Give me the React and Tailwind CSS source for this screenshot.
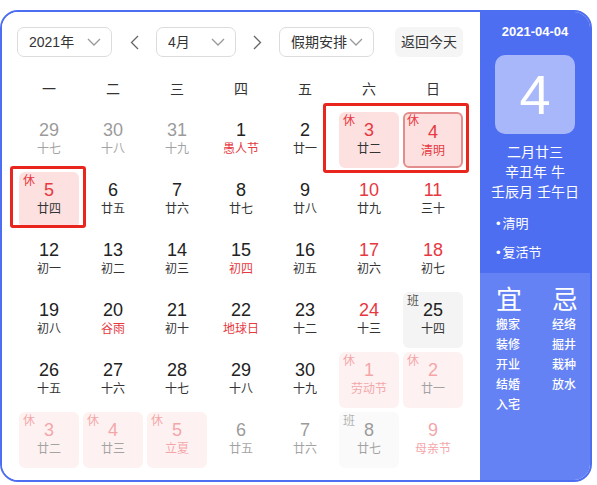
import React from 'react';

const weekdays = ['一', '二', '三', '四', '五', '六', '日'];

// t: p = prev month, n = next month; hol = 休, ban = 班, red = red number, lr = red lunar text
const days = [
  { n: 29, l: '十七', t: 'p' }, { n: 30, l: '十八', t: 'p' }, { n: 31, l: '十九', t: 'p' },
  { n: 1, l: '愚人节', lr: true }, { n: 2, l: '廿一' },
  { n: 3, l: '廿二', hol: true, red: true }, { n: 4, l: '清明', hol: true, red: true, lr: true, today: true },

  { n: 5, l: '廿四', hol: true, red: true }, { n: 6, l: '廿五' }, { n: 7, l: '廿六' }, { n: 8, l: '廿七' },
  { n: 9, l: '廿八' }, { n: 10, l: '廿九', red: true }, { n: 11, l: '三十', red: true },

  { n: 12, l: '初一' }, { n: 13, l: '初二' }, { n: 14, l: '初三' }, { n: 15, l: '初四', lr: true },
  { n: 16, l: '初五' }, { n: 17, l: '初六', red: true }, { n: 18, l: '初七', red: true },

  { n: 19, l: '初八' }, { n: 20, l: '谷雨', lr: true }, { n: 21, l: '初十' }, { n: 22, l: '地球日', lr: true },
  { n: 23, l: '十二' }, { n: 24, l: '十三', red: true }, { n: 25, l: '十四', ban: true },

  { n: 26, l: '十五' }, { n: 27, l: '十六' }, { n: 28, l: '十七' }, { n: 29, l: '十八' }, { n: 30, l: '十九' },
  { n: 1, l: '劳动节', t: 'n', hol: true, red: true, lr: true }, { n: 2, l: '廿一', t: 'n', hol: true, red: true },

  { n: 3, l: '廿二', t: 'n', hol: true, red: true }, { n: 4, l: '廿三', t: 'n', hol: true, red: true },
  { n: 5, l: '立夏', t: 'n', hol: true, red: true, lr: true }, { n: 6, l: '廿五', t: 'n' }, { n: 7, l: '廿六', t: 'n' },
  { n: 8, l: '廿七', t: 'n', ban: true }, { n: 9, l: '母亲节', t: 'n', red: true, lr: true },
];

function Chevron() {
  return (
    <svg width="14" height="8" viewBox="0 0 14 8" fill="none">
      <polyline points="1,1 7,7 13,1" stroke="#999" strokeWidth="1.3" />
    </svg>
  );
}

function Arrow({ dir }) {
  return (
    <svg width="9" height="15" viewBox="0 0 9 15" fill="none">
      <polyline points={dir === 'l' ? '8,1 1.5,7.5 8,14' : '1,1 7.5,7.5 1,14'} stroke="#666" strokeWidth="1.3" />
    </svg>
  );
}

function Select({ label, w }) {
  return (
    <div className={`${w} h-[30px] flex items-center justify-between pl-[11px] pr-[10px] border border-[#dcdcdc] rounded-[7px] text-[14px] text-[#333]`}>
      <span>{label}</span>
      <Chevron />
    </div>
  );
}

function Day({ d }) {
  let box = 'relative mx-[2px] my-[2px] h-[56px] rounded-[6px] flex flex-col items-center pt-[7px]';
  if (d.hol) box += ' bg-[#fde1e1]';
  if (d.ban) box += ' bg-[#f4f4f4]';
  if (d.today) box += ' border-2 border-[#e48d8d] pt-[5px]';
  if (d.t) box += ' opacity-[0.45]';
  const num = d.red ? 'text-[#e6393f]' : 'text-[#222]';
  const lun = d.lr ? 'text-[#e6393f]' : 'text-[#333]';
  return (
    <div className={box}>
      {d.hol && <span className={`absolute ${d.today ? 'left-[2px] top-0' : 'left-[4px] top-[2px]'} text-[12px] leading-[14px] text-[#e6393f]`}>休</span>}
      {d.ban && <span className="absolute left-[4px] top-[2px] text-[12px] leading-[14px] text-[#555]">班</span>}
      <span className={`text-[18px] leading-[22px] ${num}`}>{d.n}</span>
      <span className={`text-[12px] leading-[16px] ${lun}`}>{d.l}</span>
    </div>
  );
}

export default function App() {
  return (
    <div className="font-['Liberation_Sans','Noto_Sans_CJK_SC',sans-serif] bg-white w-[597px] h-[485px] pt-[10px]">
      <div className="w-[592px] h-[472px] border-2 border-[#4e6ef2] rounded-[18px] overflow-hidden flex">
        {/* calendar */}
        <div className="w-[478px] bg-white pt-[15px] pl-[15px]">
          <div className="flex items-center">
            <Select label="2021年" w="w-[95px]" />
            <div className="w-[44px] flex justify-center"><Arrow dir="l" /></div>
            <Select label="4月" w="w-[80px]" />
            <div className="w-[43px] flex justify-center"><Arrow dir="r" /></div>
            <Select label="假期安排" w="w-[95px]" />
            <div className="ml-[21px] w-[68px] h-[30px] flex items-center justify-center rounded-[6px] bg-[#f5f5f6] text-[14px] text-[#333]">返回今天</div>
          </div>

          <div className="grid grid-cols-7 w-[448px] mt-[17px] h-[30px] items-center text-center text-[14px] text-[#333]">
            {weekdays.map(w => <div key={w}>{w}</div>)}
          </div>

          <div className="relative grid grid-cols-7 w-[448px] mt-[6px]">
            {days.map((d, i) => <Day key={i} d={d} />)}
            <div className="absolute left-[306px] top-[-7px] w-[146px] h-[70px] border-[3px] border-[#e8261e] rounded-[3px]" />
            <div className="absolute left-[-7px] top-[56px] w-[76px] h-[62px] border-[3px] border-[#e8261e] rounded-[3px]" />
          </div>
        </div>

        {/* side panel */}
        <div className="flex-1 flex flex-col text-white">
          <div className="h-[261px] bg-[#4e6ef2] flex flex-col pt-[11px]">
            <div className="text-center text-[13px] leading-[18px] font-bold">2021-04-04</div>
            <div className="mx-auto mt-[14px] w-[80px] h-[79px] rounded-[10px] bg-white/50 flex items-center justify-center text-[56px] leading-none font-light">4</div>
            <div className="mt-[8px] text-center text-[14px] leading-[20px]">
              <div>二月廿三</div>
              <div>辛丑年 牛</div>
              <div>壬辰月 壬午日</div>
            </div>
            <div className="pl-[16px] mt-[12px] text-[13px] leading-[20px]">
              <div><span className="mr-[2px]">•</span>清明</div>
              <div className="mt-[9px]"><span className="mr-[2px]">•</span>复活节</div>
            </div>
          </div>
          <div className="flex-1 bg-[#6482f4] pl-[16px] pt-[12px] flex">
            <div className="w-[56px] flex flex-col">
              <div className="text-[26px] leading-[30px]">宜</div>
              <div className="text-[12px] leading-[20px] font-medium">
                {['搬家', '装修', '开业', '结婚', '入宅'].map(s => <div key={s}>{s}</div>)}
              </div>
            </div>
            <div className="flex flex-col">
              <div className="text-[26px] leading-[30px]">忌</div>
              <div className="text-[12px] leading-[20px] font-medium">
                {['经络', '掘井', '栽种', '放水'].map(s => <div key={s}>{s}</div>)}
              </div>
            </div>
          </div>
        </div>
      </div>
    </div>
  );
}
